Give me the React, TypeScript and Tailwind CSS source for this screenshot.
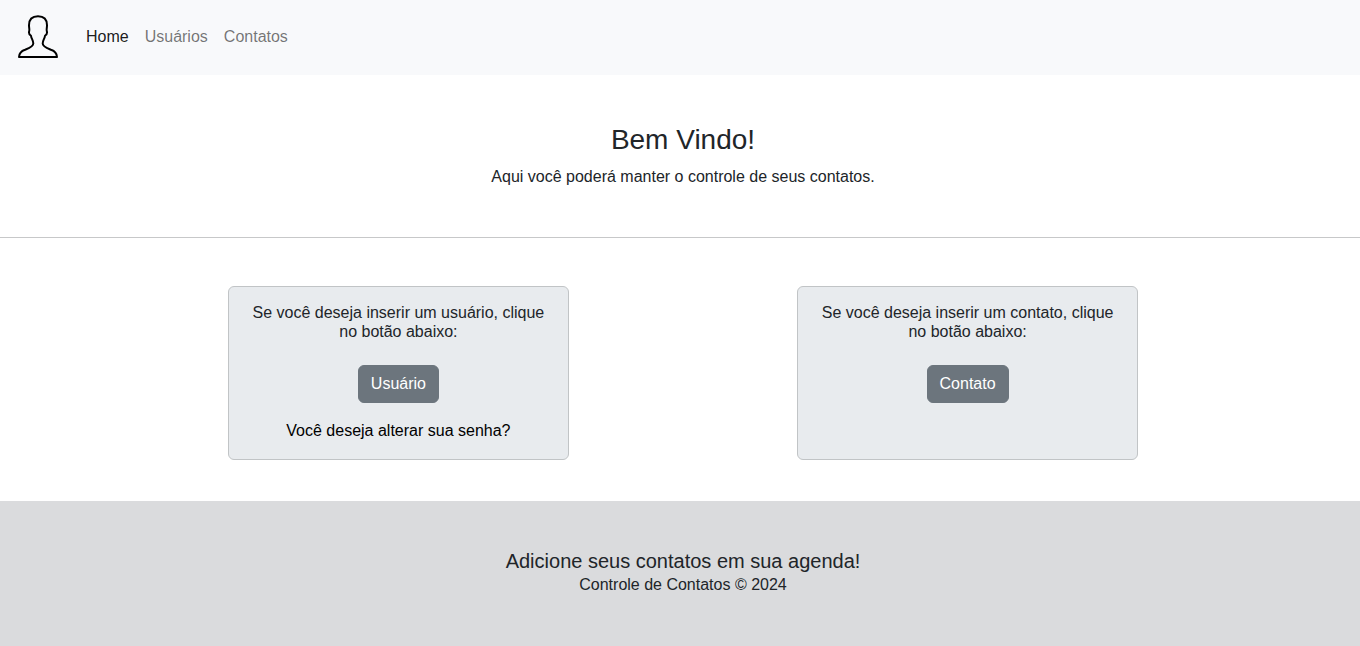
import type { ReactNode } from "react";

const navLinks = [
  { label: "Home", active: true },
  { label: "Usuários", active: false },
  { label: "Contatos", active: false },
];

function UserLogo() {
  return (
    <svg viewBox="0 0 40 44" className="h-11 w-10" fill="none" stroke="#000" strokeWidth="2" strokeLinejoin="round" aria-hidden="true">
      <path d="M1 42 C1.2 38 3.6 36 7 34.8 C10.6 33.4 15.3 31.8 15.3 28.6 C15.3 25.2 13.6 24.4 12.9 20.6 C11.5 20 10.7 18 11.2 15.9 C11.7 15.2 11 12.6 11 10.2 C11 4.4 14.4 1.2 20 1.2 C25.6 1.2 29 4.4 29 10.2 C29 12.6 28.3 15.2 28.8 15.9 C29.3 18 28.5 20 27.1 20.6 C26.4 24.4 24.7 25.2 24.7 28.6 C24.7 31.8 29.4 33.4 33 34.8 C36.4 36 38.8 38 39 42 Z" />
    </svg>
  );
}

function ActionCard({ text, action, children }: { text: string; action: string; children?: ReactNode }) {
  return (
    <div className="col-span-3 flex flex-col items-center rounded-md border border-[#c1c4c6] bg-[#e8ebee] p-4 text-center">
      <p className="leading-[19px]">{text}</p>
      <button type="button" className="mt-6 rounded-md border border-[#6c757d] bg-[#6c757d] px-3 py-[6px] text-white">
        {action}
      </button>
      {children}
    </div>
  );
}

export default function App() {
  return (
    <div className="overflow-x-hidden bg-white font-['Liberation_Sans',Arial,sans-serif] text-base text-[#212529]">
      <div className="-mr-1.5">
        <nav className="flex items-center bg-[#f8f9fb] px-[18px] pt-[15px] pb-4">
          <a href="#" aria-label="Controle de Contatos">
            <UserLogo />
          </a>
          <ul className="ml-7 flex gap-4">
            {navLinks.map((link) => (
              <li key={link.label}>
                <a href="#" className={link.active ? "text-black/90" : "text-black/55"}>
                  {link.label}
                </a>
              </li>
            ))}
          </ul>
        </nav>

        <header className="border-b border-[#c7c8c9] py-12 text-center">
          <h1 className="mb-2 text-[28px] leading-[34px]">Bem Vindo!</h1>
          <p>Aqui você poderá manter o controle de seus contatos.</p>
        </header>

        <main className="grid grid-cols-12 pt-12 pb-[41px]">
          <div className="col-span-2" />
          <ActionCard text="Se você deseja inserir um usuário, clique no botão abaixo:" action="Usuário">
            <a href="#" className="mt-4 text-black">
              Você deseja alterar sua senha?
            </a>
          </ActionCard>
          <div className="col-span-2" />
          <ActionCard text="Se você deseja inserir um contato, clique no botão abaixo:" action="Contato" />
        </main>

        <footer className="bg-[#dadbdd] pt-12 pb-[49px] text-center">
          <h2 className="text-xl leading-6">Adicione seus contatos em sua agenda!</h2>
          <p>Controle de Contatos © 2024</p>
        </footer>
      </div>
    </div>
  );
}
